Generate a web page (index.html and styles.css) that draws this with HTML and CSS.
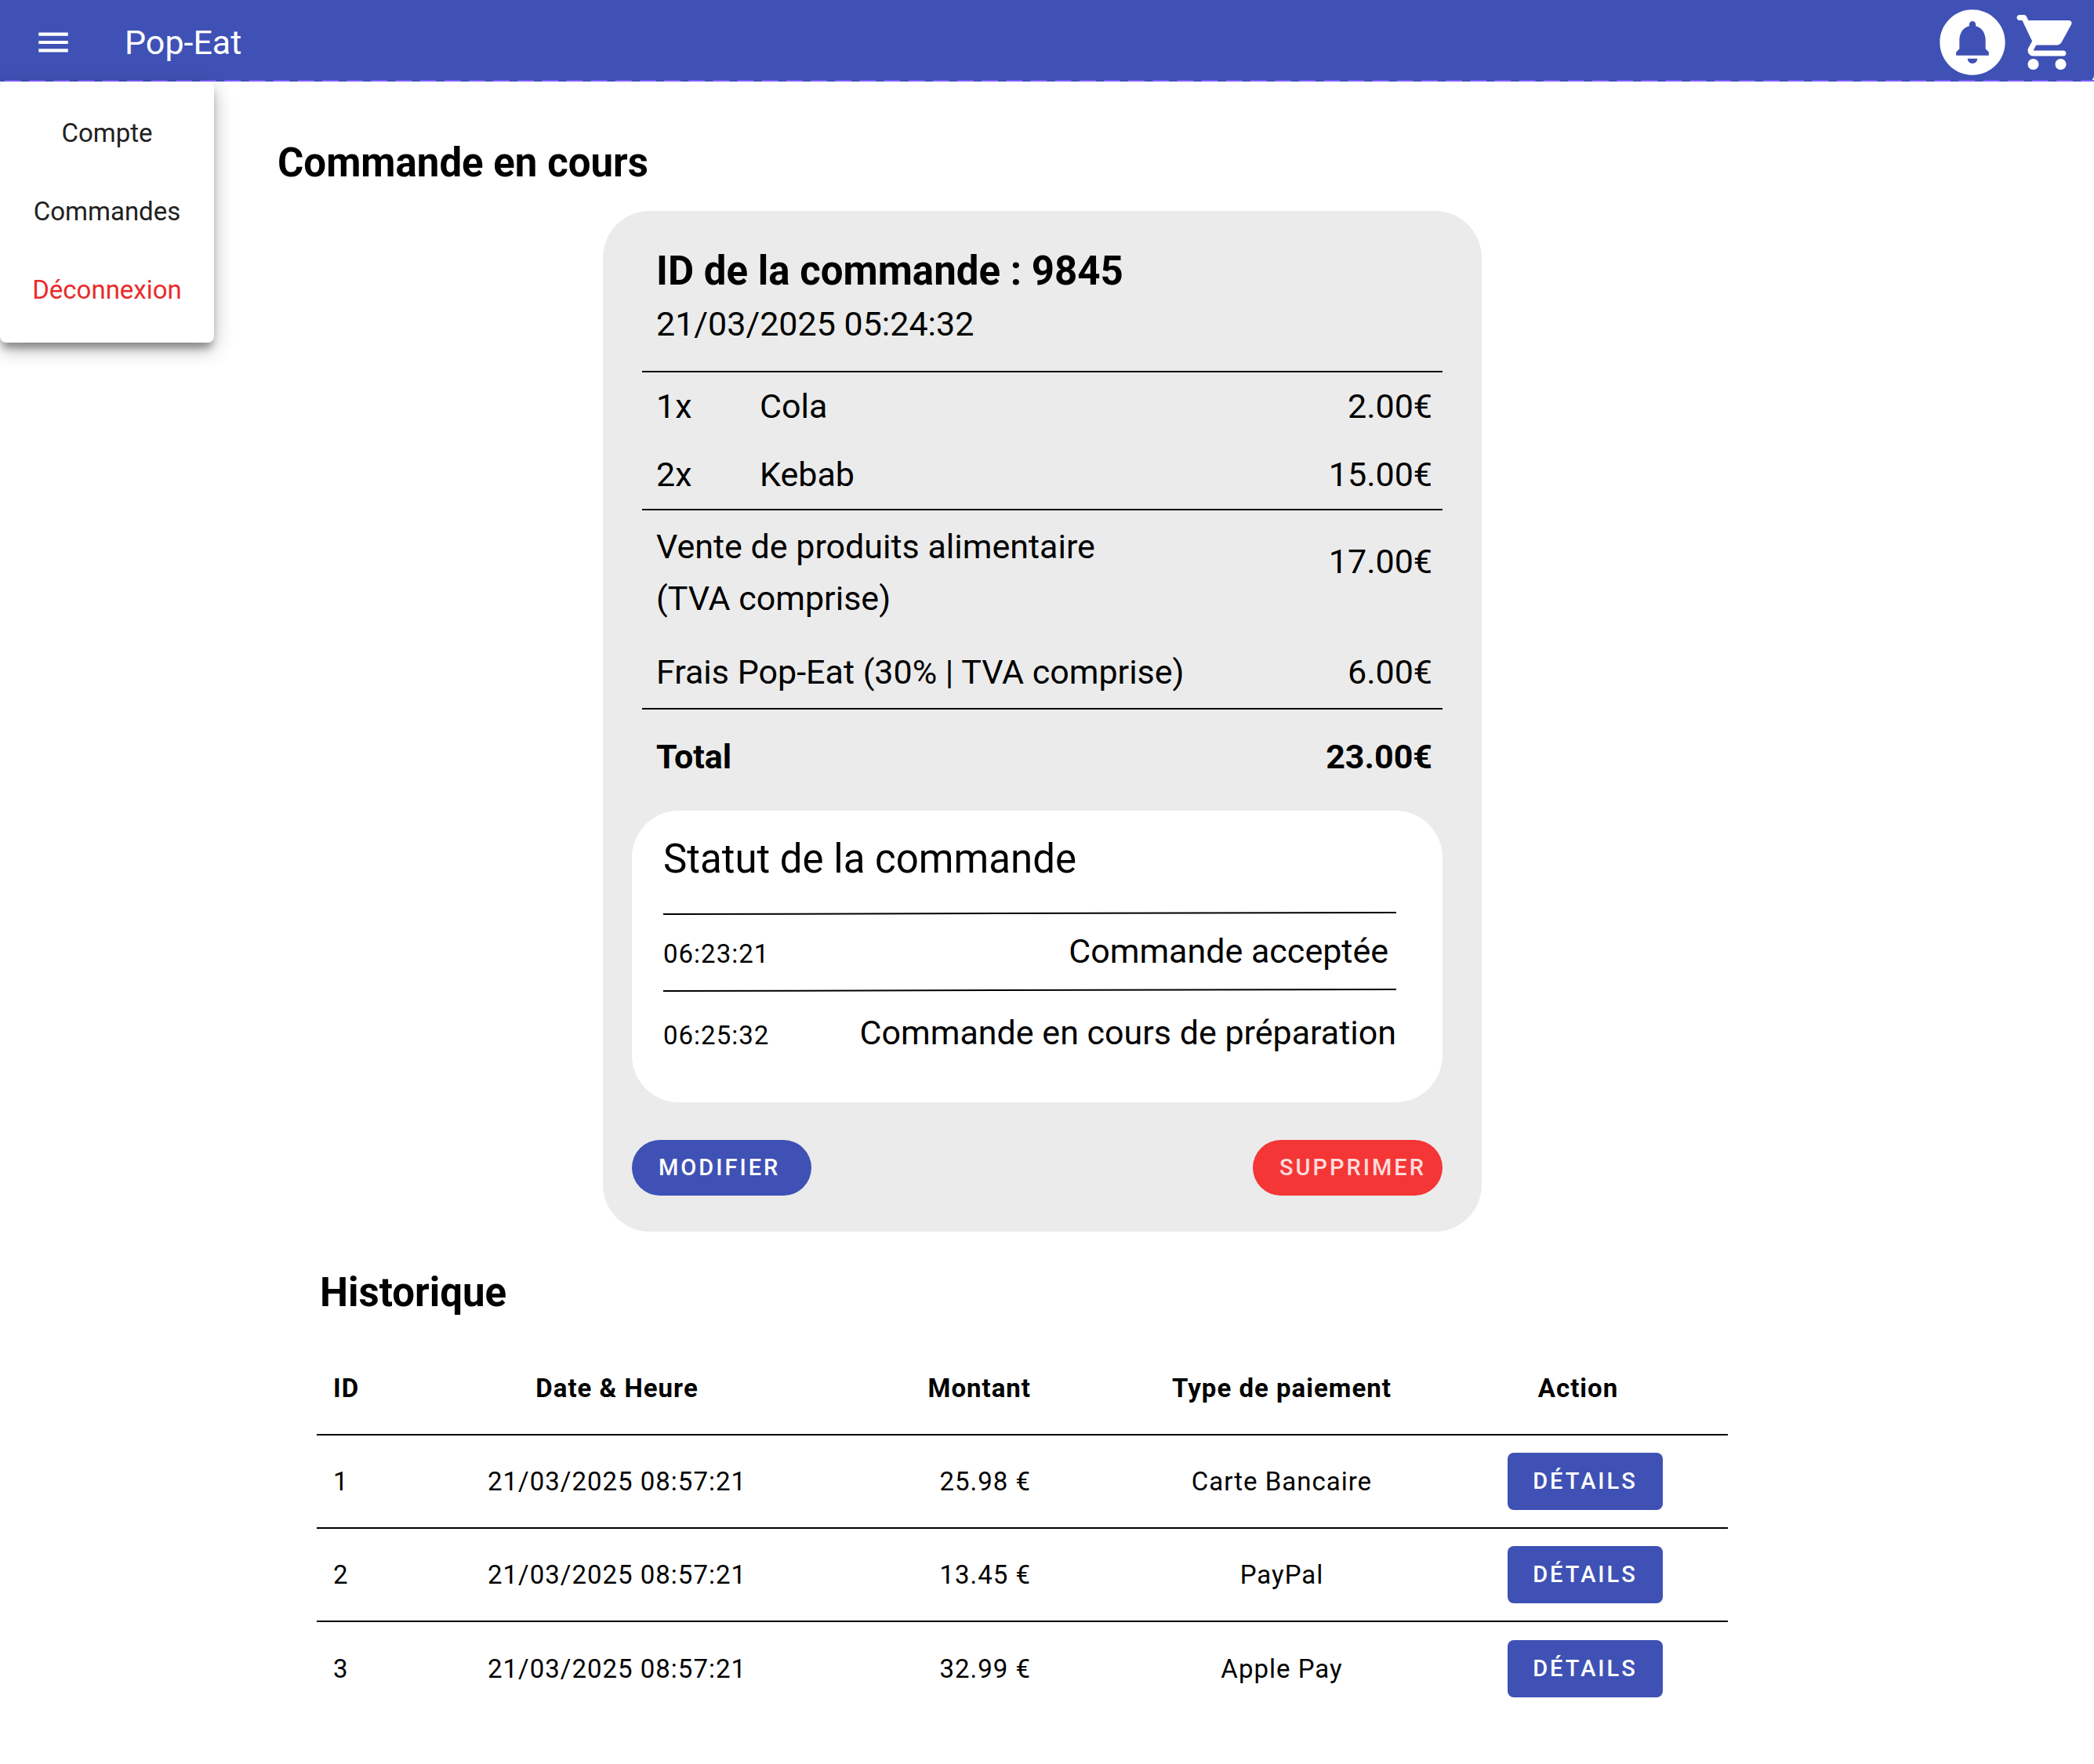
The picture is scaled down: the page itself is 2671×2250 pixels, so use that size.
FILE: index.html
```html
<!DOCTYPE html>
<html lang="fr">
<head>
<meta charset="utf-8">
<meta name="viewport" content="width=device-width, initial-scale=1">
<title>Pop-Eat</title>
<link rel="stylesheet" href="styles.css">
</head>
<body>
<header class="topbar">
  <button class="icon-button menu-toggle" type="button" aria-label="Menu" aria-expanded="true">
    <svg width="50" height="50" viewBox="0 0 24 24" fill="currentColor" aria-hidden="true"><path d="M3 18h18v-2H3v2zm0-5h18v-2H3v2zm0-7v2h18V6H3z"/></svg>
  </button>
  <span class="brand">Pop-Eat</span>
  <button class="icon-button" type="button" aria-label="Notifications">
    <svg width="100" height="100" viewBox="0 0 24 24" fill="currentColor" aria-hidden="true"><path d="M12 2C6.48 2 2 6.48 2 12s4.48 10 10 10 10-4.48 10-10S17.52 2 12 2zm0 16.5c-.83 0-1.5-.67-1.5-1.5h3c0 .83-.67 1.5-1.5 1.5zm5-2.5H7v-1l1-1v-2.61C8 9.27 9.03 7.47 11 7v-.5c0-.57.43-1 1-1s1 .43 1 1V7c1.97.47 3 2.28 3 4.39V14l1 1v1z"/></svg>
  </button>
  <button class="icon-button cart" type="button" aria-label="Panier">
    <svg width="84" height="84" viewBox="0 0 24 24" fill="currentColor" aria-hidden="true"><path d="M7 18c-1.1 0-1.99.9-1.99 2S5.9 22 7 22s2-.9 2-2-.9-2-2-2zM1 3c0 .55.45 1 1 1h1l3.6 7.59-1.35 2.44C4.52 15.37 5.48 17 7 17h11c.55 0 1-.45 1-1s-.45-1-1-1H7l1.1-2h7.45c.75 0 1.41-.41 1.75-1.03l3.58-6.49c.37-.66-.11-1.48-.87-1.48H5.21l-.67-1.43c-.16-.35-.52-.57-.9-.57H2c-.55 0-1 .45-1 1zm16 15c-1.1 0-1.99.9-1.99 2s.89 2 1.99 2 2-.9 2-2-.9-2-2-2z"/></svg>
  </button>
  <svg class="topbar-dashes" aria-hidden="true"><line x1="6" y1="1" x2="100%" y2="1" stroke="#7b61ff" stroke-width="2" stroke-dasharray="20.77 10.386"/></svg>
  <nav class="menu" aria-label="Menu du compte">
    <a class="menu-item" href="#compte">Compte</a>
    <a class="menu-item" href="#commandes">Commandes</a>
    <a class="menu-item menu-item-danger" href="#deconnexion">Déconnexion</a>
  </nav>
</header>

<main class="page">
  <section>
    <h1 class="heading">Commande en cours</h1>
    <article class="order">
      <div class="order-summary">
        <header class="order-block order-head">
          <h2 class="heading">ID de la commande : 9845</h2>
          <p class="order-date">21/03/2025 05:24:32</p>
        </header>
        <ul class="order-block order-items">
          <li class="item"><span class="quantity">1x</span><span>Cola</span><span class="amount">2.00€</span></li>
          <li class="item"><span class="quantity">2x</span><span>Kebab</span><span class="amount">15.00€</span></li>
        </ul>
        <div class="order-block order-fees">
          <div class="fee fee-tall"><span>Vente de produits alimentaire<br>(TVA comprise)</span><span class="amount">17.00€</span></div>
          <div class="fee"><span>Frais Pop-Eat (30% | TVA comprise)</span><span class="amount">6.00€</span></div>
        </div>
        <div class="order-block order-total"><span>Total</span><span class="amount">23.00€</span></div>
      </div>

      <section class="status">
        <h3 class="status-title">Statut de la commande</h3>
        <svg class="status-rule" viewBox="0 0 935 4" preserveAspectRatio="none" aria-hidden="true"><path d="M0 3L935 1" stroke="#000" stroke-width="2"/></svg>
        <div class="status-row status-row-first"><time class="status-time">06:23:21</time><span>Commande acceptée</span></div>
        <svg class="status-rule" viewBox="0 0 935 4" preserveAspectRatio="none" aria-hidden="true"><path d="M0 3L935 1" stroke="#000" stroke-width="2"/></svg>
        <div class="status-row status-row-last"><time class="status-time">06:25:32</time><span>Commande en cours de préparation</span></div>
      </section>

      <div class="order-actions">
        <button class="button button-edit" type="button">MODIFIER</button>
        <button class="button button-delete" type="button">SUPPRIMER</button>
      </div>
    </article>
  </section>

  <section class="history">
    <h2 class="heading history-title">Historique</h2>
    <table class="history-table">
      <colgroup><col class="col-id"><col class="col-date"><col class="col-amount"><col class="col-payment"><col class="col-action"></colgroup>
      <thead>
        <tr><th class="cell-id" scope="col">ID</th><th scope="col">Date &amp; Heure</th><th class="cell-amount" scope="col">Montant</th><th scope="col">Type de paiement</th><th class="head-action" scope="col">Action</th></tr>
      </thead>
      <tbody>
        <tr><td class="cell-id">1</td><td>21/03/2025 08:57:21</td><td class="cell-amount">25.98 €</td><td>Carte Bancaire</td><td><button class="button button-details" type="button">DÉTAILS</button></td></tr>
        <tr><td class="cell-id">2</td><td>21/03/2025 08:57:21</td><td class="cell-amount">13.45 €</td><td>PayPal</td><td><button class="button button-details" type="button">DÉTAILS</button></td></tr>
        <tr><td class="cell-id">3</td><td>21/03/2025 08:57:21</td><td class="cell-amount">32.99 €</td><td>Apple Pay</td><td><button class="button button-details" type="button">DÉTAILS</button></td></tr>
      </tbody>
    </table>
  </section>
</main>
</body>
</html>
```
FILE: styles.css
```css
*,
*::before,
*::after {
  box-sizing: border-box;
}

body,
h1,
h2,
h3,
p,
ul {
  margin: 0;
}

body {
  background: #fff;
  color: #000;
  font-family: Roboto, "Liberation Sans", sans-serif;
  font-size: 43px;
  line-height: 66px;
}

/* Top bar */
.topbar {
  position: relative;
  display: flex;
  align-items: center;
  height: 104px;
  padding: 4px 18px 0 43px;
  background: #3f51b5;
  border-bottom-right-radius: 8px;
  color: #fff;
}

.icon-button {
  display: flex;
  padding: 0;
  border: 0;
  background: none;
  color: inherit;
}

.brand {
  margin-left: 66px;
  margin-right: auto;
}

.cart {
  margin-left: 3px;
}

.topbar-dashes {
  position: absolute;
  left: 0;
  bottom: 0;
  width: 100%;
  height: 2px;
}

.menu {
  position: absolute;
  top: 104px;
  left: 0;
  display: flex;
  flex-direction: column;
  width: 273px;
  padding: 16px 0 17px;
  border-radius: 8px;
  background: #fff;
  box-shadow: 0 10px 10px -3px rgba(0, 0, 0, 0.3), 0 8px 24px rgba(0, 0, 0, 0.3);
}

.menu-item {
  color: #212121;
  font-size: 33px;
  line-height: 100px;
  text-align: center;
  text-decoration: none;
}

.menu-item-danger {
  color: #e92c2c;
}

/* Page */
.page {
  padding: 74px 366px 64px 354px;
}

.heading {
  font-size: 51px;
  font-weight: 700;
  line-height: 60px;
}

/* Current order */
.order {
  max-width: 1121px;
  margin: 31px auto 0;
  padding: 47px 50px 46px 37px;
  border-radius: 60px;
  background: #ebebeb;
}

.order-summary {
  margin-left: 13px;
}

.order-block {
  padding: 0 13px 0 18px;
  border-bottom: 2px solid #000;
}

.order-head {
  padding-bottom: 27px;
}

.order-date {
  margin-top: 4px;
}

.order-items {
  list-style: none;
}

.item {
  display: flex;
  line-height: 87px;
}

.quantity {
  width: 132px;
}

.amount {
  margin-left: auto;
}

.order-fees {
  display: flex;
  flex-direction: column;
  gap: 28px;
  padding-top: 13px;
  padding-bottom: 13px;
}

.fee,
.order-total {
  display: flex;
}

.fee-tall .amount {
  padding-top: 19px;
}

.order-total {
  padding-top: 27px;
  border-bottom: 0;
  font-weight: 700;
}

/* Order status */
.status {
  margin-top: 36px;
  padding: 32px 59px 56px 40px;
  border-radius: 60px;
  background: #fff;
}

.status-title {
  margin-bottom: 37px;
  font-size: 51px;
  font-weight: 400;
  line-height: 60px;
}

.status-rule {
  display: block;
  width: 100%;
  height: 4px;
}

.status-row {
  display: flex;
  align-items: baseline;
  justify-content: space-between;
}

.status-row-first {
  padding: 13px 10px 15px 0;
}

.status-row-last {
  padding-top: 19px;
}

.status-time {
  font-size: 33px;
  line-height: 40px;
  letter-spacing: 1px;
}

/* Buttons */
.button {
  border: 0;
  background: #3f51b5;
  color: #fff;
  font-family: inherit;
  font-size: 29px;
  font-weight: 500;
  line-height: 35px;
  letter-spacing: 3px;
}

.order-actions {
  display: flex;
  justify-content: space-between;
  margin-top: 48px;
}

.button-edit,
.button-delete {
  padding: 18px 24px 18px 34px;
  border-radius: 36px;
  text-align: left;
}

.button-edit {
  width: 229px;
}

.button-delete {
  width: 242px;
  background: #f53636;
  color: #fddcdc;
}

.button-details {
  display: block;
  width: 198px;
  margin: 0 auto;
  padding: 19px 0;
  border-radius: 8px;
}

/* History */
.history {
  margin-top: 48px;
  padding: 0 101px 0 50px;
}

.history-title {
  padding-left: 4px;
}

.history-table {
  width: 100%;
  margin-top: 33px;
  border-spacing: 0;
  table-layout: fixed;
  font-size: 33px;
  line-height: 40px;
  letter-spacing: 1px;
  text-align: center;
}

.history-table th,
.history-table td {
  height: 119px;
  padding: 0;
  border-bottom: 2px solid #000;
}

.history-table tbody tr:last-child td {
  border-bottom: 0;
}

.col-id {
  width: 200px;
}

.col-date {
  width: 366px;
}

.col-amount {
  width: 460px;
}

.col-payment {
  width: 410px;
}

.col-action {
  width: 364px;
}

.history-table .cell-id {
  padding-left: 21px;
  text-align: left;
}

.history-table .cell-amount {
  padding-right: 115px;
  text-align: right;
}

.history-table .head-action {
  padding-right: 18px;
}
```
